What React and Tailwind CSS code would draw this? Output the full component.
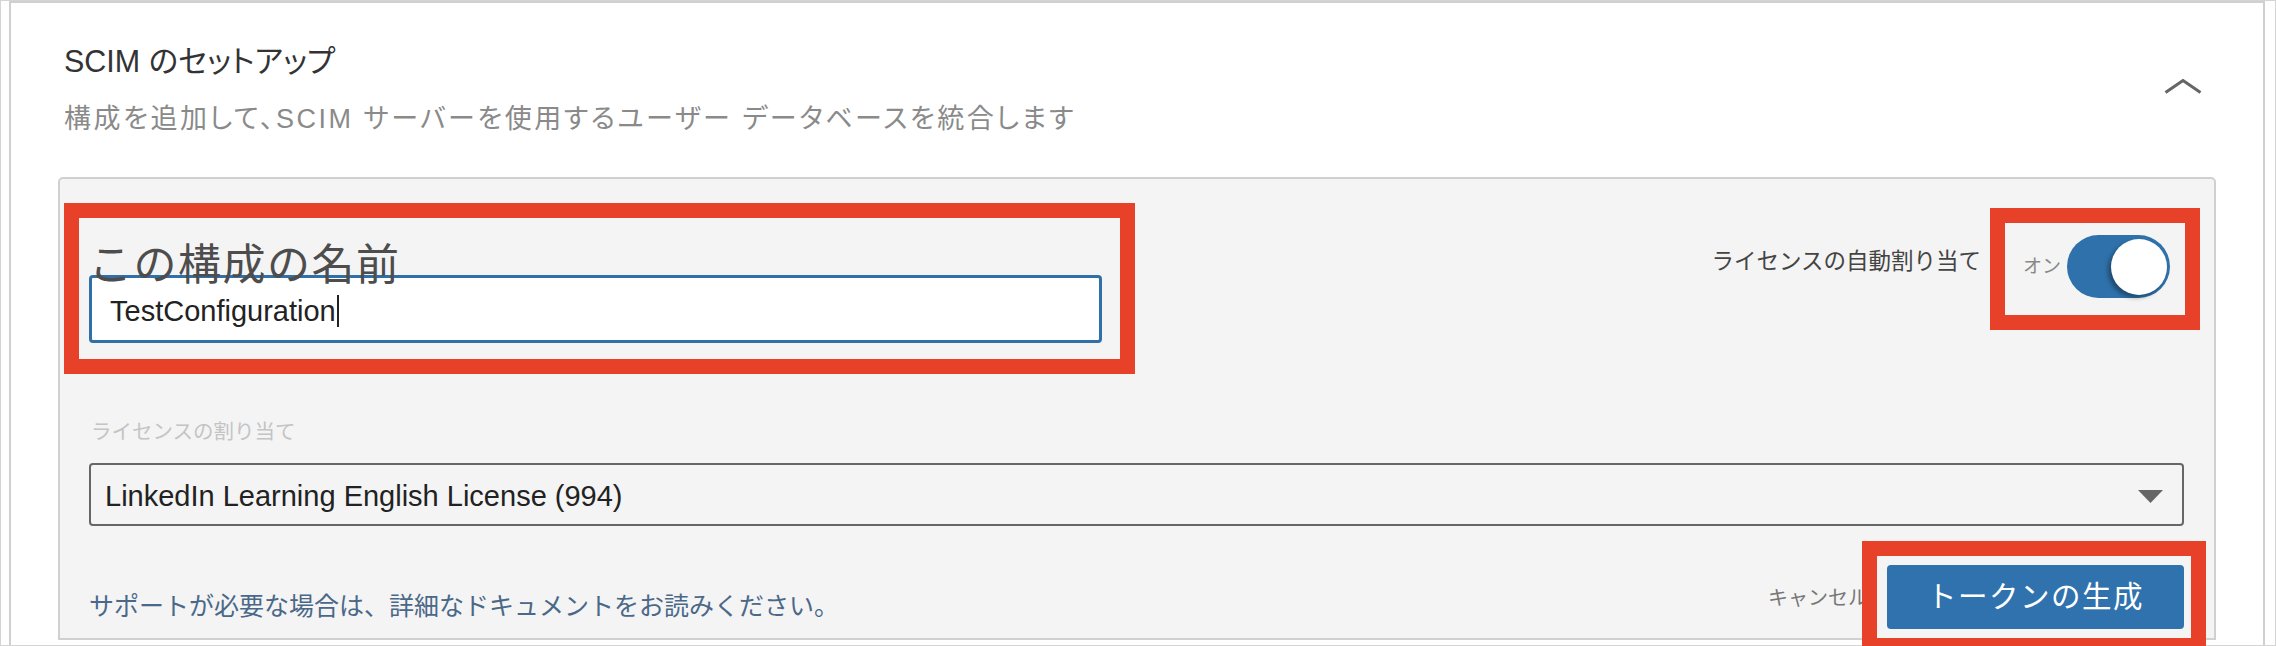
export default function App() {
  return (
    <div className="h-[646px] w-full overflow-hidden bg-white font-['Liberation_Sans','Noto_Sans_CJK_JP',sans-serif]">
      <div className="h-full border border-[#d4d4d4] pl-[8px] pr-[10px]">
        <div className="h-full border-2 border-b-0 border-[#d0d0d0] px-[47px]">
          {/* header */}
          <div className="flex items-start justify-between pl-[6px] pr-[14px] pt-[39px]">
            <div>
              <h1 className="text-[30.5px] leading-[38px] text-[#333] [font-feature-settings:'palt']">SCIM のセットアップ</h1>
              <p className="mt-[22px] text-[27px] leading-[34px] tracking-[2.5px] text-[#8a8a8a] [font-feature-settings:'palt']">
                構成を追加して、SCIM サーバーを使用するユーザー データベースを統合します
              </p>
            </div>
            <svg width="38" height="15" viewBox="0 0 38 15" className="mt-[37px]">
              <polyline points="1.5,13.5 19,1.5 36.5,13.5" fill="none" stroke="#666" strokeWidth="3" />
            </svg>
          </div>

          {/* card */}
          <div className="mt-[41px] h-[463px] rounded-t-[5px] border-2 border-[#d0d0d0] bg-[#f4f4f4] pl-[29px] pr-[30px] pt-[24px]">
            <div className="flex items-start justify-between">
              <div className="-ml-[25px] w-[1071px] border-[15px] border-[#e8412a] pb-[16px] pl-[10px] pr-[18px] pt-[23px]">
                <div className="relative z-10 -mb-[14px] text-[43px] leading-[48px] tracking-[1.5px] text-[#4d4d4d]">この構成の名前</div>
                <div className="flex h-[68px] items-center rounded-[4px] border-[3px] border-[#2f70a8] bg-white pl-[18px] pt-[3px]">
                  <span className="text-[29px] leading-[34px] text-[#222]">TestConfiguration</span>
                  <span className="ml-[1px] h-[32px] w-[2px] bg-[#222]"></span>
                </div>
              </div>

              <div className="flex items-start">
                <span className="mr-[9px] mt-[44px] text-[22.5px] leading-[30px] text-[#444]">ライセンスの自動割り当て</span>
                <div className="-mr-[16px] mt-[5px] flex items-center border-[15px] border-[#e8412a] pb-[17px] pl-[18px] pr-[15px] pt-[12px]">
                  <span className="mr-[6px] text-[19px] leading-[24px] text-[#888]">オン</span>
                  <div className="flex h-[63px] w-[103px] items-center justify-end rounded-full bg-[#2f71ab] pr-[3px]">
                    <div className="h-[56px] w-[56px] rounded-full bg-white shadow-[-3px_3px_4px_rgba(0,0,0,0.35)]"></div>
                  </div>
                </div>
              </div>
            </div>

            <div className="ml-[2px] mt-[44px] text-[20.5px] leading-[28px] text-[#c4c4c4]">ライセンスの割り当て</div>

            <div className="mt-[17px] flex h-[63px] items-center justify-between rounded-[4px] border-2 border-[#666] pl-[14px] pr-[19px] pt-[3px]">
              <span className="text-[29px] leading-[34px] text-[#222]">LinkedIn Learning English License (994)</span>
              <svg width="25" height="13" viewBox="0 0 25 13">
                <polygon points="0,0 25,0 12.5,13" fill="#666" />
              </svg>
            </div>

            <div className="mt-[15px] flex items-start justify-between">
              <span className="mt-[49px] text-[25px] leading-[32px] text-[#4a6888]">サポートが必要な場合は、詳細なドキュメントをお読みください。</span>
              <div className="-mr-[22px] flex items-start">
                <span className="mt-[43px] text-[20px] leading-[28px] text-[#777]">キャンセル</span>
                <div className="relative z-10 -ml-[6px] border-[15px] border-[#e8412a] pb-[9px] pl-[10px] pr-[7px] pt-[9px]">
                  <button className="flex h-[64px] w-[297px] items-center justify-center rounded-[4px] bg-[#3072ad] text-[29.5px] leading-[36px] tracking-[1.5px] text-white">
                    トークンの生成
                  </button>
                </div>
              </div>
            </div>
          </div>
        </div>
      </div>
    </div>
  );
}
